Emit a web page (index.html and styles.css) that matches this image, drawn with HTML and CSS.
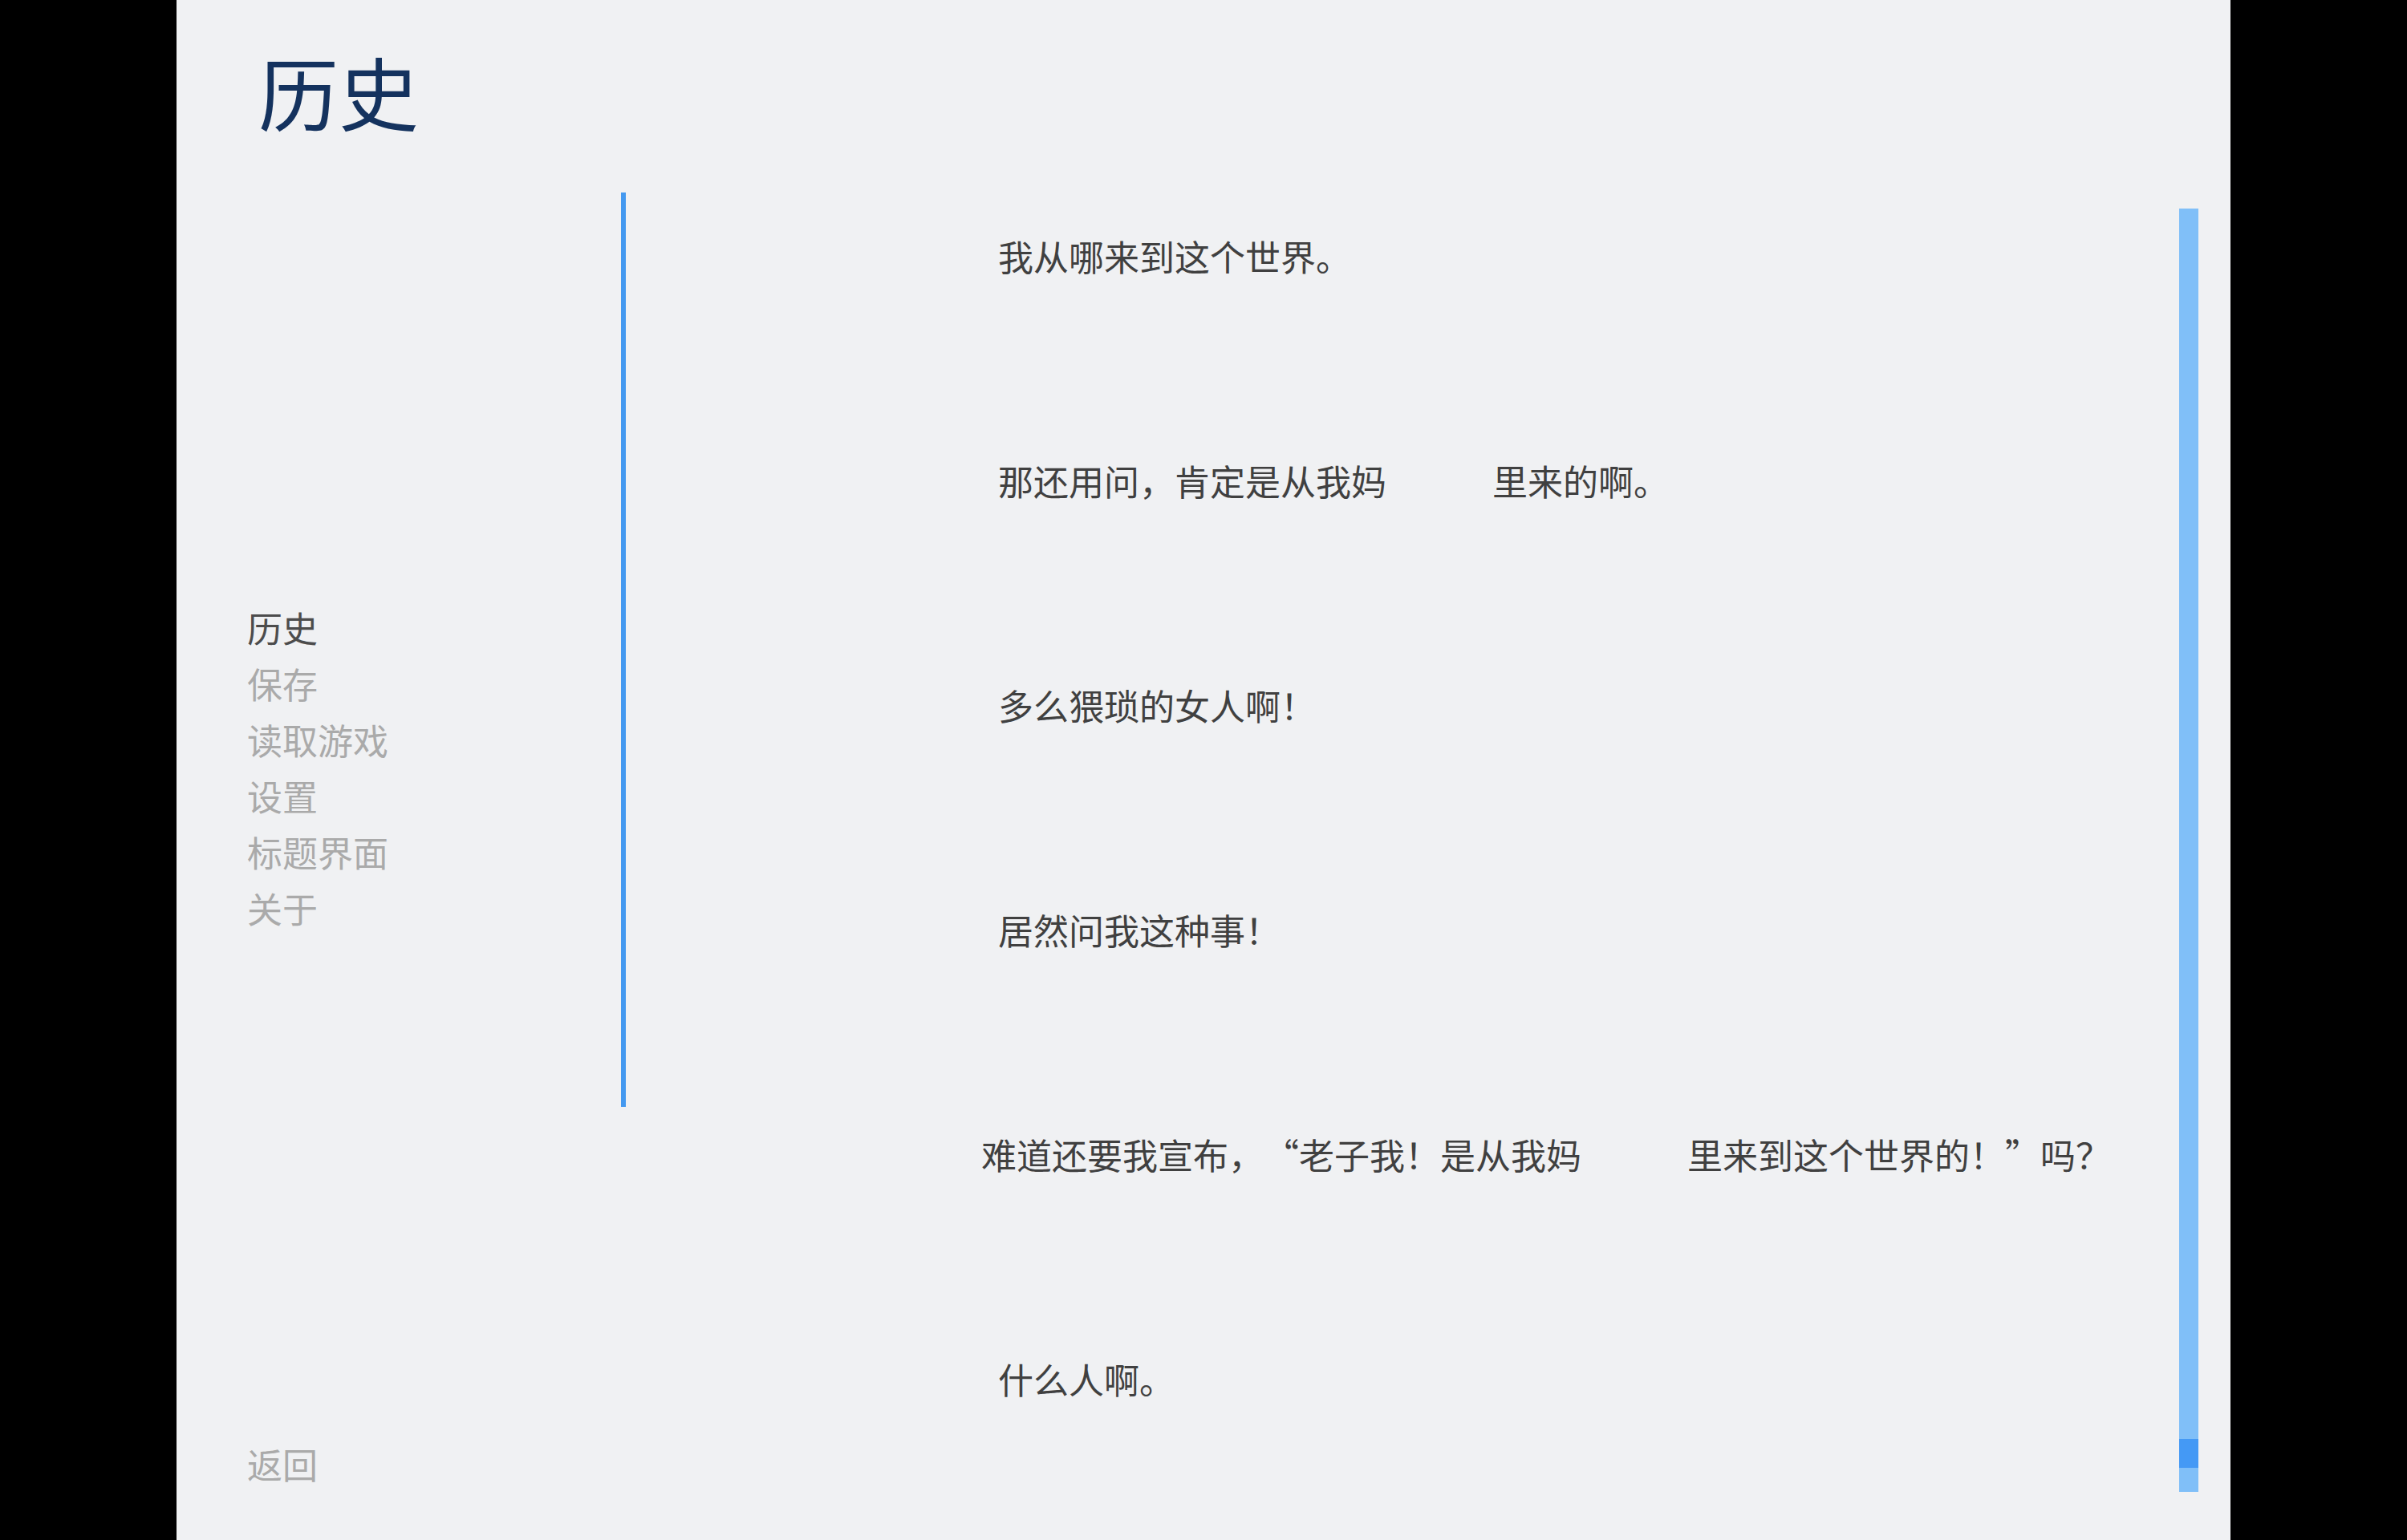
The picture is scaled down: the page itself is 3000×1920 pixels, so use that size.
FILE: index.html
```html
<!DOCTYPE html>
<html lang="zh-CN">
<head>
<meta charset="utf-8">
<title>历史</title>
<link rel="stylesheet" href="styles.css">
</head>
<body>
<div class="screen">
  <div class="side">
    <h1 class="title">历史</h1>
    <nav class="nav">
      <div class="nav-item selected">历史</div>
      <div class="nav-item">保存</div>
      <div class="nav-item">读取游戏</div>
      <div class="nav-item">设置</div>
      <div class="nav-item">标题界面</div>
      <div class="nav-item">关于</div>
    </nav>
    <div class="return">返回</div>
  </div>
  <div class="divider"></div>
  <div class="history">
    <div class="entry"><p class="what">我从哪来到这个世界。</p></div>
    <div class="entry"><p class="what">那还用问，肯定是从我妈<span class="gap"></span>里来的啊。</p></div>
    <div class="entry"><p class="what">多么猥琐的女人啊！</p></div>
    <div class="entry"><p class="what">居然问我这种事！</p></div>
    <div class="entry"><p class="what wide">难道还要我宣布，“老子我！是从我妈<span class="gap"></span>里来到这个世界的！”吗？</p></div>
    <div class="entry"><p class="what">什么人啊。</p></div>
  </div>
  <div class="scrollbar"><div class="thumb"></div></div>
</div>
</body>
</html>
```
FILE: styles.css
```css
html, body {
  margin: 0;
  padding: 0;
  background: #000000;
}
body {
  width: 3000px;
  height: 1920px;
  overflow: hidden;
  font-family: "Noto Sans CJK SC", "Noto Sans", sans-serif;
  text-spacing-trim: space-all;
}
.screen {
  width: 2560px;
  height: 1920px;
  margin: 0 auto;
  background: #f0f1f3;
  display: flex;
  flex-direction: row;
  align-items: flex-start;
}
.side {
  width: 554px;
  height: 1920px;
  display: grid;
  grid-template-areas: "a";
  flex: none;
}
.title {
  grid-area: a;
  align-self: start;
  margin: 0;
  padding: 63px 0 0 102px;
  font-size: 100px;
  line-height: 100px;
  font-weight: 400;
  color: #14325e;
}
.nav {
  grid-area: a;
  align-self: center;
  padding-left: 88px;
  margin-top: -7px;
}
.nav-item {
  font-size: 44px;
  line-height: 70px;
  height: 70px;
  color: #aaaaaa;
}
.nav-item.selected {
  color: #4c4c4c;
}
.return {
  grid-area: a;
  align-self: end;
  padding: 0 0 60px 88px;
  font-size: 44px;
  line-height: 70px;
  color: #aaaaaa;
}
.divider {
  flex: none;
  width: 6px;
  height: 1140px;
  margin-top: 240px;
  background: #4499f0;
}
.history {
  flex: none;
  width: 1936px;
  padding-top: 289px;
  box-sizing: border-box;
  padding-left: 464px;
}
.entry {
  height: 280px;
}
.what {
  margin: 0;
  font-size: 44px;
  line-height: 60px;
  color: #404040;
  white-space: nowrap;
}
.what.wide {
  margin-left: -21px;
}
.gap {
  display: inline-block;
  width: 3em;
}
.scrollbar {
  flex: none;
  width: 24px;
  height: 1600px;
  margin-top: 260px;
  background: #80bff8;
  display: flex;
  flex-direction: column;
  justify-content: flex-end;
  padding-bottom: 30px;
  box-sizing: border-box;
}
.thumb {
  height: 36px;
  background: #4499f5;
}
```
